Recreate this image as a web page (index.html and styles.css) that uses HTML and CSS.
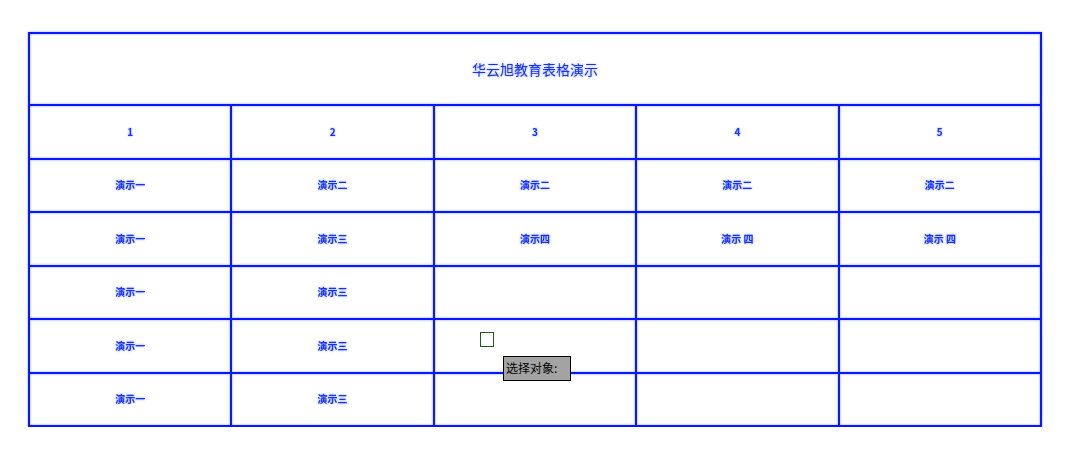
FILE: index.html
```html
<!DOCTYPE html>
<html lang="zh">
<head>
<meta charset="utf-8">
<title>华云旭教育表格演示</title>
<link rel="stylesheet" href="styles.css">
</head>
<body>
<div class="stage">
<table class="demo">
  <tr class="title-row"><td colspan="5" class="title">华云旭教育表格演示</td></tr>
  <tr><td>1</td><td>2</td><td>3</td><td>4</td><td>5</td></tr>
  <tr><td>演示一</td><td>演示二</td><td>演示二</td><td>演示二</td><td>演示二</td></tr>
  <tr><td>演示一</td><td>演示三</td><td>演示四</td><td>演示 四</td><td>演示 四</td></tr>
  <tr><td>演示一</td><td>演示三</td><td></td><td></td><td></td></tr>
  <tr><td>演示一</td><td>演示三</td><td></td><td></td><td></td></tr>
  <tr><td>演示一</td><td>演示三</td><td></td><td></td><td></td></tr>
</table>
<span class="handle"></span>
<span class="tip">选择对象:</span>
</div>
</body>
</html>
```
FILE: styles.css
```css
html, body {
  margin: 0;
  padding: 0;
  background: #ffffff;
}
body {
  font-family: "Noto Sans CJK SC", "Liberation Sans", sans-serif;
}
.stage {
  position: relative;
  padding: 32px 0 0 28px;
}
.demo {
  border-collapse: collapse;
  width: 1014px;
  table-layout: fixed;
  filter: drop-shadow(0 0 1px #8aa2ff);
}
.demo td {
  border: 2px solid #0a16ff;
  height: 51.5px;
  padding: 0;
  text-align: center;
  vertical-align: middle;
  color: #1530ff;
  font-size: 10px;
  font-weight: bold;
  line-height: 12px;
}
.demo .title-row td {
  height: 70px;
  font-size: 14px;
  font-weight: normal;
  line-height: 18px;
  padding-top: 0;
}
.handle {
  position: absolute;
  left: 480px;
  top: 332px;
  width: 12px;
  height: 13px;
  border: 1px solid #1f5a1f;
  background: #ffffff;
}
.tip {
  position: absolute;
  left: 503px;
  top: 356px;
  height: 23px;
  width: 64px;
  border: 1px solid #000000;
  background: #a3a3a3;
  color: #000000;
  font-size: 12px;
  line-height: 22px;
  padding: 0 0 0 2px;
}
```
